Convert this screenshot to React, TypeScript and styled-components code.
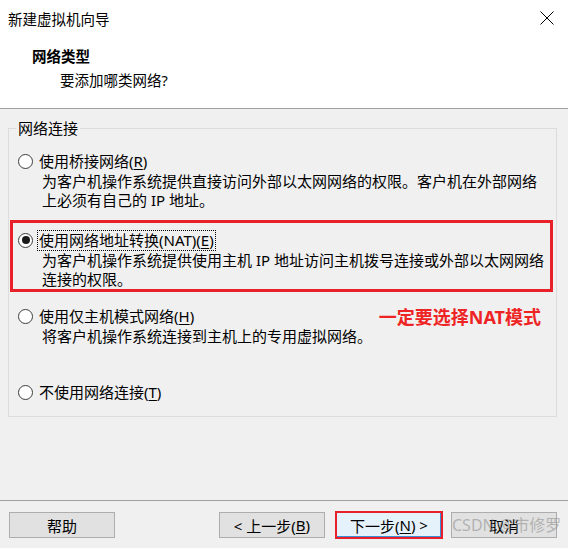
import React from "react";
import styled, { createGlobalStyle } from "styled-components";

const Global = createGlobalStyle`
  html, body { margin: 0; padding: 0; background: #f0f0f0; }
  body { font-family: "Noto Sans", "Noto Sans CJK SC", sans-serif; }
  #root { width: 568px; height: 548px; }
`;

const Window = styled.div`
  width: 568px;
  height: 548px;
  background: #f0f0f0;
  display: flex;
  flex-direction: column;
  position: relative;
  overflow: hidden;
  color: #000;
  font-size: 15px;
  font-family: "Noto Sans", "Noto Sans CJK SC", sans-serif;
`;

const TitleBar = styled.div`
  height: 36px;
  background: #fff;
  display: flex;
  align-items: center;
  justify-content: space-between;
  padding: 0 14px 0 8px;
  box-sizing: border-box;
  font-size: 14.5px;
`;

const CloseIcon = () => (
  <svg width="14" height="14" viewBox="0 0 14 14">
    <path d="M0.5 0.5 L13.5 13.5 M13.5 0.5 L0.5 13.5" stroke="#000" strokeWidth="1" fill="none" />
  </svg>
);

const Header = styled.div`
  height: 73px;
  box-sizing: border-box;
  background: #fff;
  border-bottom: 1px solid #a0a0a0;
  padding: 10px 0 0 32px;
`;

const HeaderTitle = styled.div`
  font-weight: bold;
  line-height: 20px;
  font-size: 14.5px;
`;

const HeaderSub = styled.div`
  line-height: 20px;
  margin: 4px 0 0 28px;
  font-size: 14.5px;
`;

const Body = styled.div`
  padding: 10px 11px 0 8px;
`;

const Group = styled.fieldset`
  margin: 0;
  padding: 0 0 14px 0;
  border: 1px solid #dcdcdc;
  min-width: 0;
`;

const Legend = styled.legend`
  padding: 0 2px;
  margin-left: 7px;
  line-height: 18px;
  font-size: 15px;
`;

const Highlight = styled.div`
  margin: 10px 3px 0 1px;
  border: 3px solid #e8202a;
  padding: 7px 0 0 0;
`;

const Option = styled.div<{ $gap?: number }>`
  padding-left: 9px;
  margin-top: ${(p) => p.$gap ?? 0}px;
  ${Highlight} & {
    padding-left: 5px;
  }
`;

const RadioRow = styled.div`
  height: 20px;
  display: flex;
  align-items: center;
`;

const Radio = styled.span<{ $checked?: boolean }>`
  width: 15px;
  height: 15px;
  box-sizing: border-box;
  border: 1px solid #3c3c3c;
  border-radius: 50%;
  background: #fff;
  display: flex;
  align-items: center;
  justify-content: center;
  flex: none;
  &::after {
    content: "";
    display: ${(p) => (p.$checked ? "block" : "none")};
    width: 8px;
    height: 8px;
    border-radius: 50%;
    background: #1a1a1a;
  }
`;

const Label = styled.span<{ $focus?: boolean }>`
  margin-left: 4px;
  padding: 0 1px;
  line-height: 19px;
  border: 1px dotted ${(p) => (p.$focus ? "#000" : "transparent")};
  white-space: nowrap;
`;

const Key = styled.span`
  text-decoration: underline;
  text-underline-offset: 2px;
`;

const Desc = styled.div`
  margin: 1px 0 0 24px;
  line-height: 19px;
  white-space: nowrap;
`;

const Note = styled.span`
  margin-left: auto;
  margin-right: 15px;
  color: #ee2424;
  font-weight: bold;
  font-size: 18px;
  white-space: nowrap;
`;

const Footer = styled.div`
  margin-top: auto;
  height: 48px;
  box-sizing: border-box;
  border-top: 1px solid #a0a0a0;
  display: flex;
  align-items: flex-start;
  padding: 11px 11px 0 9px;
`;

const Button = styled.div<{ $primary?: boolean }>`
  width: ${(p) => (p.$primary ? 108 : 106)}px;
  height: ${(p) => (p.$primary ? 28 : 26)}px;
  margin-top: ${(p) => (p.$primary ? -1 : 0)}px;
  box-sizing: border-box;
  background: ${(p) => (p.$primary ? "#e5f1fb" : "#e1e1e1")};
  border: ${(p) => (p.$primary ? "2px solid #e8202a" : "1px solid #adadad")};
  box-shadow: ${(p) => (p.$primary ? "inset -1px -1px 0 #3c8fd6" : "none")};
  display: flex;
  align-items: center;
  justify-content: center;
  font-size: 15px;
  white-space: nowrap;
`;

const Spacer = styled.div`
  flex: 1;
`;

const ButtonGap = styled.div<{ $w: number }>`
  width: ${(p) => p.$w}px;
  flex: none;
`;

const Watermark = styled.div`
  position: absolute;
  left: 452px;
  top: 514px;
  font-size: 16px;
  line-height: 22px;
  color: rgba(130, 130, 130, 0.5);
  white-space: nowrap;
  pointer-events: none;
`;

export default function App() {
  return (
    <Window>
      <Global />
      <TitleBar>
        <span>新建虚拟机向导</span>
        <CloseIcon />
      </TitleBar>
      <Header>
        <HeaderTitle>网络类型</HeaderTitle>
        <HeaderSub>要添加哪类网络?</HeaderSub>
      </Header>
      <Body>
        <Group>
          <Legend>网络连接</Legend>
          <Option $gap={14}>
            <RadioRow>
              <Radio />
              <Label>
                使用桥接网络(<Key>R</Key>)
              </Label>
            </RadioRow>
            <Desc>
              为客户机操作系统提供直接访问外部以太网网络的权限。客户机在外部网络
              <br />
              上必须有自己的 IP 地址。
            </Desc>
          </Option>
          <Highlight>
            <Option>
              <RadioRow>
                <Radio $checked />
                <Label $focus>
                  使用网络地址转换(NAT)(<Key>E</Key>)
                </Label>
              </RadioRow>
              <Desc>
                为客户机操作系统提供使用主机 IP 地址访问主机拨号连接或外部以太网网络
                <br />
                连接的权限。
              </Desc>
            </Option>
          </Highlight>
          <Option $gap={14}>
            <RadioRow>
              <Radio />
              <Label>
                使用仅主机模式网络(<Key>H</Key>)
              </Label>
              <Note>一定要选择NAT模式</Note>
            </RadioRow>
            <Desc>将客户机操作系统连接到主机上的专用虚拟网络。</Desc>
          </Option>
          <Option $gap={36}>
            <RadioRow>
              <Radio />
              <Label>
                不使用网络连接(<Key>T</Key>)
              </Label>
            </RadioRow>
          </Option>
        </Group>
      </Body>
      <Footer>
        <Button>帮助</Button>
        <Spacer />
        <Button>
          &lt; 上一步(<Key>B</Key>)
        </Button>
        <ButtonGap $w={10} />
        <Button $primary>
          下一步(<Key>N</Key>) &gt;
        </Button>
        <ButtonGap $w={8} />
        <Button>取消</Button>
      </Footer>
      <Watermark>CSDN @市修罗</Watermark>
    </Window>
  );
}
